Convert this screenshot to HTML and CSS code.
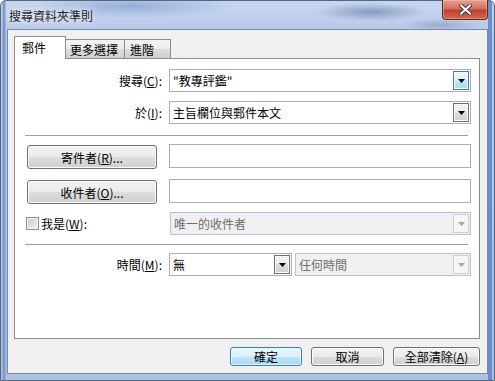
FILE: index.html
```html
<!DOCTYPE html>
<html>
<head>
    <title>搜尋資料夾準則</title>
    <meta charset="utf-8">
    <link rel="stylesheet" href="styles.css">
</head>
<body>
    <div class="window">
        <!-- Title bar -->
        <div class="titlebar">
            <span class="title">搜尋資料夾準則</span>
            <div class="closeButton">
                <svg width="13" height="11" viewBox="0 0 13 11">
                    <path d="M2 1.5L11 9.5M11 1.5L2 9.5" stroke="#3b3b3b" stroke-width="4" stroke-linecap="square"/>
                    <path d="M2 1.5L11 9.5M11 1.5L2 9.5" stroke="#ffffff" stroke-width="2" stroke-linecap="square"/>
                </svg>
            </div>
        </div>

        <div class="client">
            <div class="tabs">
                <div class="tab tabActive">郵件</div>
                <div class="tab tabMore">更多選擇</div>
                <div class="tab tabAdvanced">進階</div>
            </div>

            <div class="panel">
                <div class="row rowSearch">
                    <div class="lead"><span class="label">搜尋(<u>C</u>):</span></div>
                    <div class="combo">
                        <span class="value">"教專評鑑"</span>
                        <span class="drop dropHot"><svg width="7" height="4" viewBox="0 0 7 4"><path d="M0 0h7L3.5 4z"/></svg></span>
                    </div>
                </div>

                <div class="row rowIn">
                    <div class="lead"><span class="label">於(<u>I</u>):</span></div>
                    <div class="combo">
                        <span class="value">主旨欄位與郵件本文</span>
                        <span class="drop"><svg width="7" height="4" viewBox="0 0 7 4"><path d="M0 0h7L3.5 4z"/></svg></span>
                    </div>
                </div>

                <div class="separator sepFirst"></div>

                <div class="row rowFrom">
                    <div class="lead"><button class="btn btnWide">寄件者(<u>R</u>)...</button></div>
                    <div class="field"></div>
                </div>

                <div class="row rowTo">
                    <div class="lead"><button class="btn btnWide">收件者(<u>O</u>)...</button></div>
                    <div class="field"></div>
                </div>

                <div class="row rowMe">
                    <div class="lead leadCheck">
                        <span class="checkbox"></span>
                        <span class="checkLabel">我是(<u>W</u>):</span>
                    </div>
                    <div class="combo comboDisabled">
                        <span class="value">唯一的收件者</span>
                        <span class="drop"><svg width="7" height="4" viewBox="0 0 7 4"><path d="M0 0h7L3.5 4z"/></svg></span>
                    </div>
                </div>

                <div class="separator sepSecond"></div>

                <div class="row rowTime">
                    <div class="lead"><span class="label">時間(<u>M</u>):</span></div>
                    <div class="combo comboTime">
                        <span class="value">無</span>
                        <span class="drop"><svg width="7" height="4" viewBox="0 0 7 4"><path d="M0 0h7L3.5 4z"/></svg></span>
                    </div>
                    <div class="combo comboDisabled comboWhen">
                        <span class="value">任何時間</span>
                        <span class="drop"><svg width="7" height="4" viewBox="0 0 7 4"><path d="M0 0h7L3.5 4z"/></svg></span>
                    </div>
                </div>
            </div>

            <div class="footer">
                <button class="btn btnDefault btnOk">確定</button>
                <button class="btn btnCancel">取消</button>
                <button class="btn btnClear">全部清除(<u>A</u>)</button>
            </div>
        </div>
    </div>
</body>
</html>
```

FILE: styles.css
```css
body {
    margin: 0;
    width: 495px;
    height: 381px;
    overflow: hidden;
    font-family: "Noto Sans CJK TC", "Noto Sans", sans-serif;
    font-size: 12px;
    line-height: 15px;
    color: #000;
}

u {
    text-decoration: underline;
    text-underline-offset: 1px;
}

/* Aero frame */
.window {
    box-sizing: border-box;
    height: 381px;
    display: flex;
    flex-direction: column;
    padding: 0 6px 6px 6px;
    border: 1px solid #55677f;
    border-radius: 6px 6px 0 0;
    background:
        linear-gradient(to right, transparent 0 1px, #7d9acf 2px 4px, transparent 5px calc(100% - 6px), #6c8dcc calc(100% - 6px) calc(100% - 2px), transparent calc(100% - 2px)),
        radial-gradient(ellipse 100px 12px at 130px 5px, rgba(120, 150, 205, 0.6), transparent),
        radial-gradient(ellipse 55px 9px at 370px 11px, rgba(70, 90, 130, 0.45), transparent),
        radial-gradient(ellipse 40px 6px at 440px 24px, rgba(90, 110, 150, 0.35), transparent),
        linear-gradient(180deg, #c6d6ee 0%, #b3c7e8 10%, #acc2e5 100%);
}

.titlebar {
    height: 28px;
    display: flex;
    align-items: center;
    justify-content: space-between;
}

.title {
    margin-left: 2px;
    margin-top: 1px;
    color: #1e1e1e;
    text-shadow: 0 0 6px rgba(255, 255, 255, 0.9), 0 0 10px rgba(255, 255, 255, 0.7);
}

.closeButton {
    align-self: flex-start;
    box-sizing: border-box;
    width: 46px;
    height: 20px;
    margin-top: -1px;
    display: flex;
    justify-content: center;
    align-items: center;
    border: 1px solid #5e2a24;
    border-top: none;
    border-radius: 0 0 4px 4px;
    background: linear-gradient(180deg, #e6a194 0%, #d46f5f 45%, #c0402e 55%, #cf6a4f 100%);
    box-shadow: inset 0 0 0 1px rgba(255, 200, 190, 0.4);
}

/* Client area */
.client {
    flex: 1;
    display: flex;
    flex-direction: column;
    padding: 6px 7px 7px 6px;
    background-color: #f0f0f0;
    border: 1px solid #7a8aa3;
}

.tabs {
    display: flex;
    align-items: flex-end;
    height: 22px;
    position: relative;
    z-index: 1;
}

.tab {
    box-sizing: border-box;
    height: 19px;
    padding-top: 2px;
    border: 1px solid #898c95;
    border-bottom: none;
    background: linear-gradient(180deg, #f3f3f3 0%, #ebebeb 50%, #dedede 50%, #cfcfcf 100%);
}

.tabActive {
    width: 52px;
    height: 23px;
    margin-bottom: -1px;
    padding-left: 7px;
    padding-top: 3px;
    background: #ffffff;
}

.tabMore {
    width: 59px;
    padding-left: 4px;
    border-left: none;
}

.tabAdvanced {
    width: 46px;
    padding-left: 5px;
    border-left: none;
}

.panel {
    flex: 1;
    padding: 10px 8px 0 10px;
    background-color: #ffffff;
    border: 1px solid #898c95;
}

.row {
    display: flex;
    align-items: center;
}

.lead {
    flex: 0 0 144px;
    display: flex;
    justify-content: flex-end;
}

.label {
    padding-right: 7px;
}

.rowIn {
    margin-top: 9px;
}

.separator {
    height: 1px;
    margin-right: 3px;
    background-color: #a0a0a0;
}

.sepFirst {
    margin-top: 11px;
}

.rowFrom {
    margin-top: 8px;
    align-items: flex-start;
}

.rowTo {
    margin-top: 10px;
    align-items: flex-start;
}

.rowMe {
    margin-top: 8px;
}

.sepSecond {
    margin-top: 9px;
}

.rowTime {
    margin-top: 8px;
}

/* Combo boxes and fields */
.combo {
    flex: 1;
    box-sizing: border-box;
    height: 23px;
    display: flex;
    align-items: center;
    border: 1px solid #abadb3;
    background-color: #ffffff;
}

.value {
    flex: 1;
    padding-left: 3px;
    white-space: nowrap;
}

.drop {
    box-sizing: border-box;
    width: 16px;
    height: 19px;
    margin-right: 1px;
    display: flex;
    justify-content: center;
    align-items: center;
    border: 1px solid #707070;
    background: linear-gradient(180deg, #f2f2f2 0%, #ebebeb 50%, #dddddd 50%, #cfcfcf 100%);
    box-shadow: inset 0 0 0 1px #fbfbfb;
}

.dropHot {
    border-color: #3c7fb1;
    background: linear-gradient(180deg, #eaf6fd 0%, #d9f0fc 50%, #bee6fd 50%, #a7d9f5 100%);
}

.drop svg {
    fill: #000000;
}

.comboDisabled {
    border-color: #aec3dc;
    background-color: #f0f0f0;
    color: #6d6d6d;
}

.comboDisabled .drop {
    border-color: #cfcfcf;
    background: #f6f6f6;
    box-shadow: none;
}

.comboDisabled .drop svg {
    fill: #a4a4a4;
}

.comboTime {
    flex: 0 0 123px;
}

.comboWhen {
    margin-left: 3px;
}

.field {
    flex: 1;
    box-sizing: border-box;
    height: 24px;
    border: 1px solid #abadb3;
    background-color: #ffffff;
}

/* Buttons */
.btn {
    box-sizing: border-box;
    padding: 0;
    font-family: inherit;
    font-size: 12px;
    line-height: 15px;
    color: #000;
    border: 1px solid #707070;
    border-radius: 3px;
    background: linear-gradient(180deg, #f2f2f2 0%, #ebebeb 50%, #dddddd 50%, #cfcfcf 100%);
    box-shadow: inset 0 0 0 1px #fcfcfc;
}

.btnWide {
    width: 130px;
    height: 24px;
    margin: 1px 12px 0 0;
}

.leadCheck {
    justify-content: flex-start;
    align-items: center;
    padding-left: 1px;
}

.checkbox {
    box-sizing: border-box;
    width: 13px;
    height: 13px;
    border: 1px solid #8e8f8f;
    background: linear-gradient(135deg, #c9c9c9 0%, #e4e4e4 60%, #f4f4f4 100%);
    box-shadow: inset 0 0 0 1px #f4f4f4;
}

.checkLabel {
    margin-left: 2px;
}

.footer {
    display: flex;
    justify-content: flex-end;
    gap: 9px;
    margin-top: 8px;
    height: 19px;
}

.footer .btn {
    height: 19px;
}

.btnDefault {
    border-color: #3c7fb1;
    background: linear-gradient(180deg, #eaf6fd 0%, #d9f0fc 50%, #bee6fd 50%, #a7d9f5 100%);
    box-shadow: inset 0 0 0 1px #e6f4fc;
}

.btnOk {
    width: 72px;
}

.btnCancel {
    width: 73px;
}

.btnClear {
    width: 87px;
}
```
